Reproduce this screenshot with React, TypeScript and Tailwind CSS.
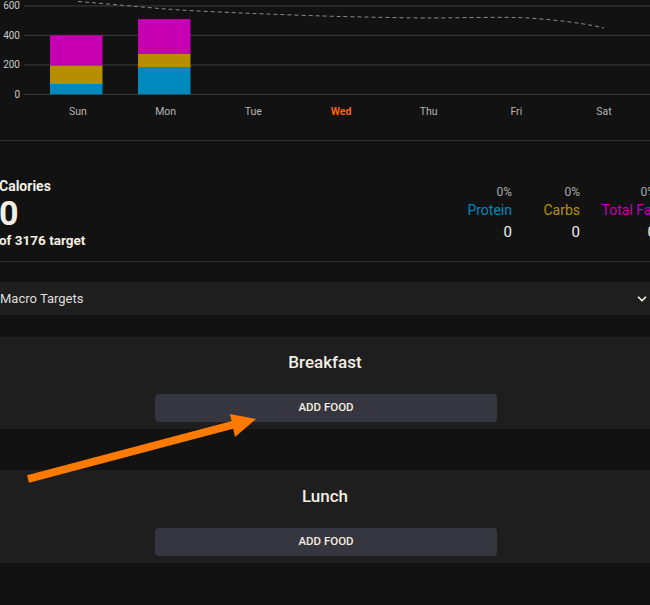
import { ChevronDown } from "lucide-react";

const days = ["Sun", "Mon", "Tue", "Wed", "Thu", "Fri", "Sat"];

// y position for a calorie value in chart pixels
const y = (v: number) => 94.3 - v * 0.1475;

const bars = [
  { x: 50, protein: 70, carbs: 195, fat: 400 },
  { x: 138, protein: 185, carbs: 275, fat: 510 },
];

const trend = "M78,1.5 C110,4 140,7 166,9 S230,12.5 254,13.5 S320,16 341,16.5 S410,18 429,18 S495,17 516,17.5 S580,22 604,28";

function WeekChart() {
  return (
    <svg width="650" height="140" className="block">
      {[0, 200, 400, 600].map((v) => (
        <g key={v}>
          <line x1="24" x2="650" y1={y(v)} y2={y(v)} stroke="#343434" strokeWidth="1.2" />
          <text x="20" y={y(v) + 3.5} textAnchor="end" fontSize="10" fill="#c9c9c9">
            {v}
          </text>
        </g>
      ))}
      {bars.map((b) => (
        <g key={b.x}>
          <rect x={b.x} y={y(b.fat)} width="52.5" height={y(b.carbs) - y(b.fat)} fill="#c600b2" />
          <rect x={b.x} y={y(b.carbs)} width="52.5" height={y(b.protein) - y(b.carbs)} fill="#b78e00" />
          <rect x={b.x} y={y(b.protein)} width="52.5" height={y(0) - y(b.protein)} fill="#0089bd" />
        </g>
      ))}
      <path d={trend} fill="none" stroke="#8a8a8a" strokeWidth="1" strokeDasharray="4 3" />
      {days.map((d, i) => (
        <text
          key={d}
          x={78 + i * 87.67}
          y="115"
          textAnchor="middle"
          fontSize="10.5"
          fontWeight={d === "Wed" ? 700 : 400}
          fill={d === "Wed" ? "#ff5d0a" : "#b5b5b5"}
        >
          {d}
        </text>
      ))}
    </svg>
  );
}

const macros = [
  { name: "Protein", color: "text-[#0089bd]", w: "w-[70px]" },
  { name: "Carbs", color: "text-[#b78e00]", w: "w-[68px]" },
  { name: "Total Fat", color: "text-[#c600b2]", w: "w-[76px]" },
];

function MealCard({ title, pt }: { title: string; pt: string }) {
  return (
    <div className={`flex flex-col items-center bg-[#1e1e1e] ${pt}`}>
      <h2 className="text-[17px] font-medium leading-6 text-[#f3efe3]">{title}</h2>
      <button className="ml-[2px] mt-5 h-7 w-[342px] rounded bg-[#363640] text-[11.5px] font-medium text-[#f3efe3]">
        ADD FOOD
      </button>
      <div className="h-[7px]" />
    </div>
  );
}

export default function App() {
  return (
    <div
      className="relative h-[605px] w-[650px] overflow-hidden bg-[#121212] text-[#f3efe3]"
      style={{ fontFamily: "Roboto, 'Liberation Sans', sans-serif" }}
    >
      <WeekChart />
      <div className="h-px bg-[#2f2f2f]" />

      {/* Calories summary */}
      <div className="flex items-start justify-between pb-3 pt-[35px]">
        <div className="-ml-px">
          <div className="text-[14px] font-bold leading-5">Calories</div>
          <div className="text-[34px] font-bold leading-[34px]">0</div>
          <div className="mt-px text-[13.5px] font-bold leading-[18px]">of 3176 target</div>
        </div>
        <div className="-mr-[6px] mt-2 flex">
          {macros.map((m) => (
            <div key={m.name} className={`${m.w} shrink-0 text-right`}>
              <div className="text-[12px] leading-4 text-[#a9a9a9]">0%</div>
              <div className={`text-[14px] leading-5 ${m.color}`}>{m.name}</div>
              <div className="mt-0.5 text-[15px] leading-5">0</div>
            </div>
          ))}
        </div>
      </div>
      <div className="h-px bg-[#2f2f2f]" />

      {/* Macro targets accordion */}
      <div className="mt-5 flex h-[33px] items-center justify-between bg-[#1e1e1e] pr-[1px]">
        <span className="text-[13px] text-[#dedede]">Macro Targets</span>
        <ChevronDown size={14} strokeWidth={3} className="text-[#f3efe3]" />
      </div>

      <div className="mt-[22px]">
        <MealCard title="Breakfast" pt="pt-[13px]" />
      </div>
      <div className="mt-[41px]">
        <MealCard title="Lunch" pt="pt-[14px]" />
      </div>

      {/* annotation arrow */}
      <svg className="pointer-events-none absolute left-0 top-0" width="650" height="605">
        <line x1="28" y1="479" x2="234" y2="424.5" stroke="#ff7a00" strokeWidth="8" />
        <polygon points="230,414 256,419 235,437" fill="#ff7a00" />
      </svg>
    </div>
  );
}
